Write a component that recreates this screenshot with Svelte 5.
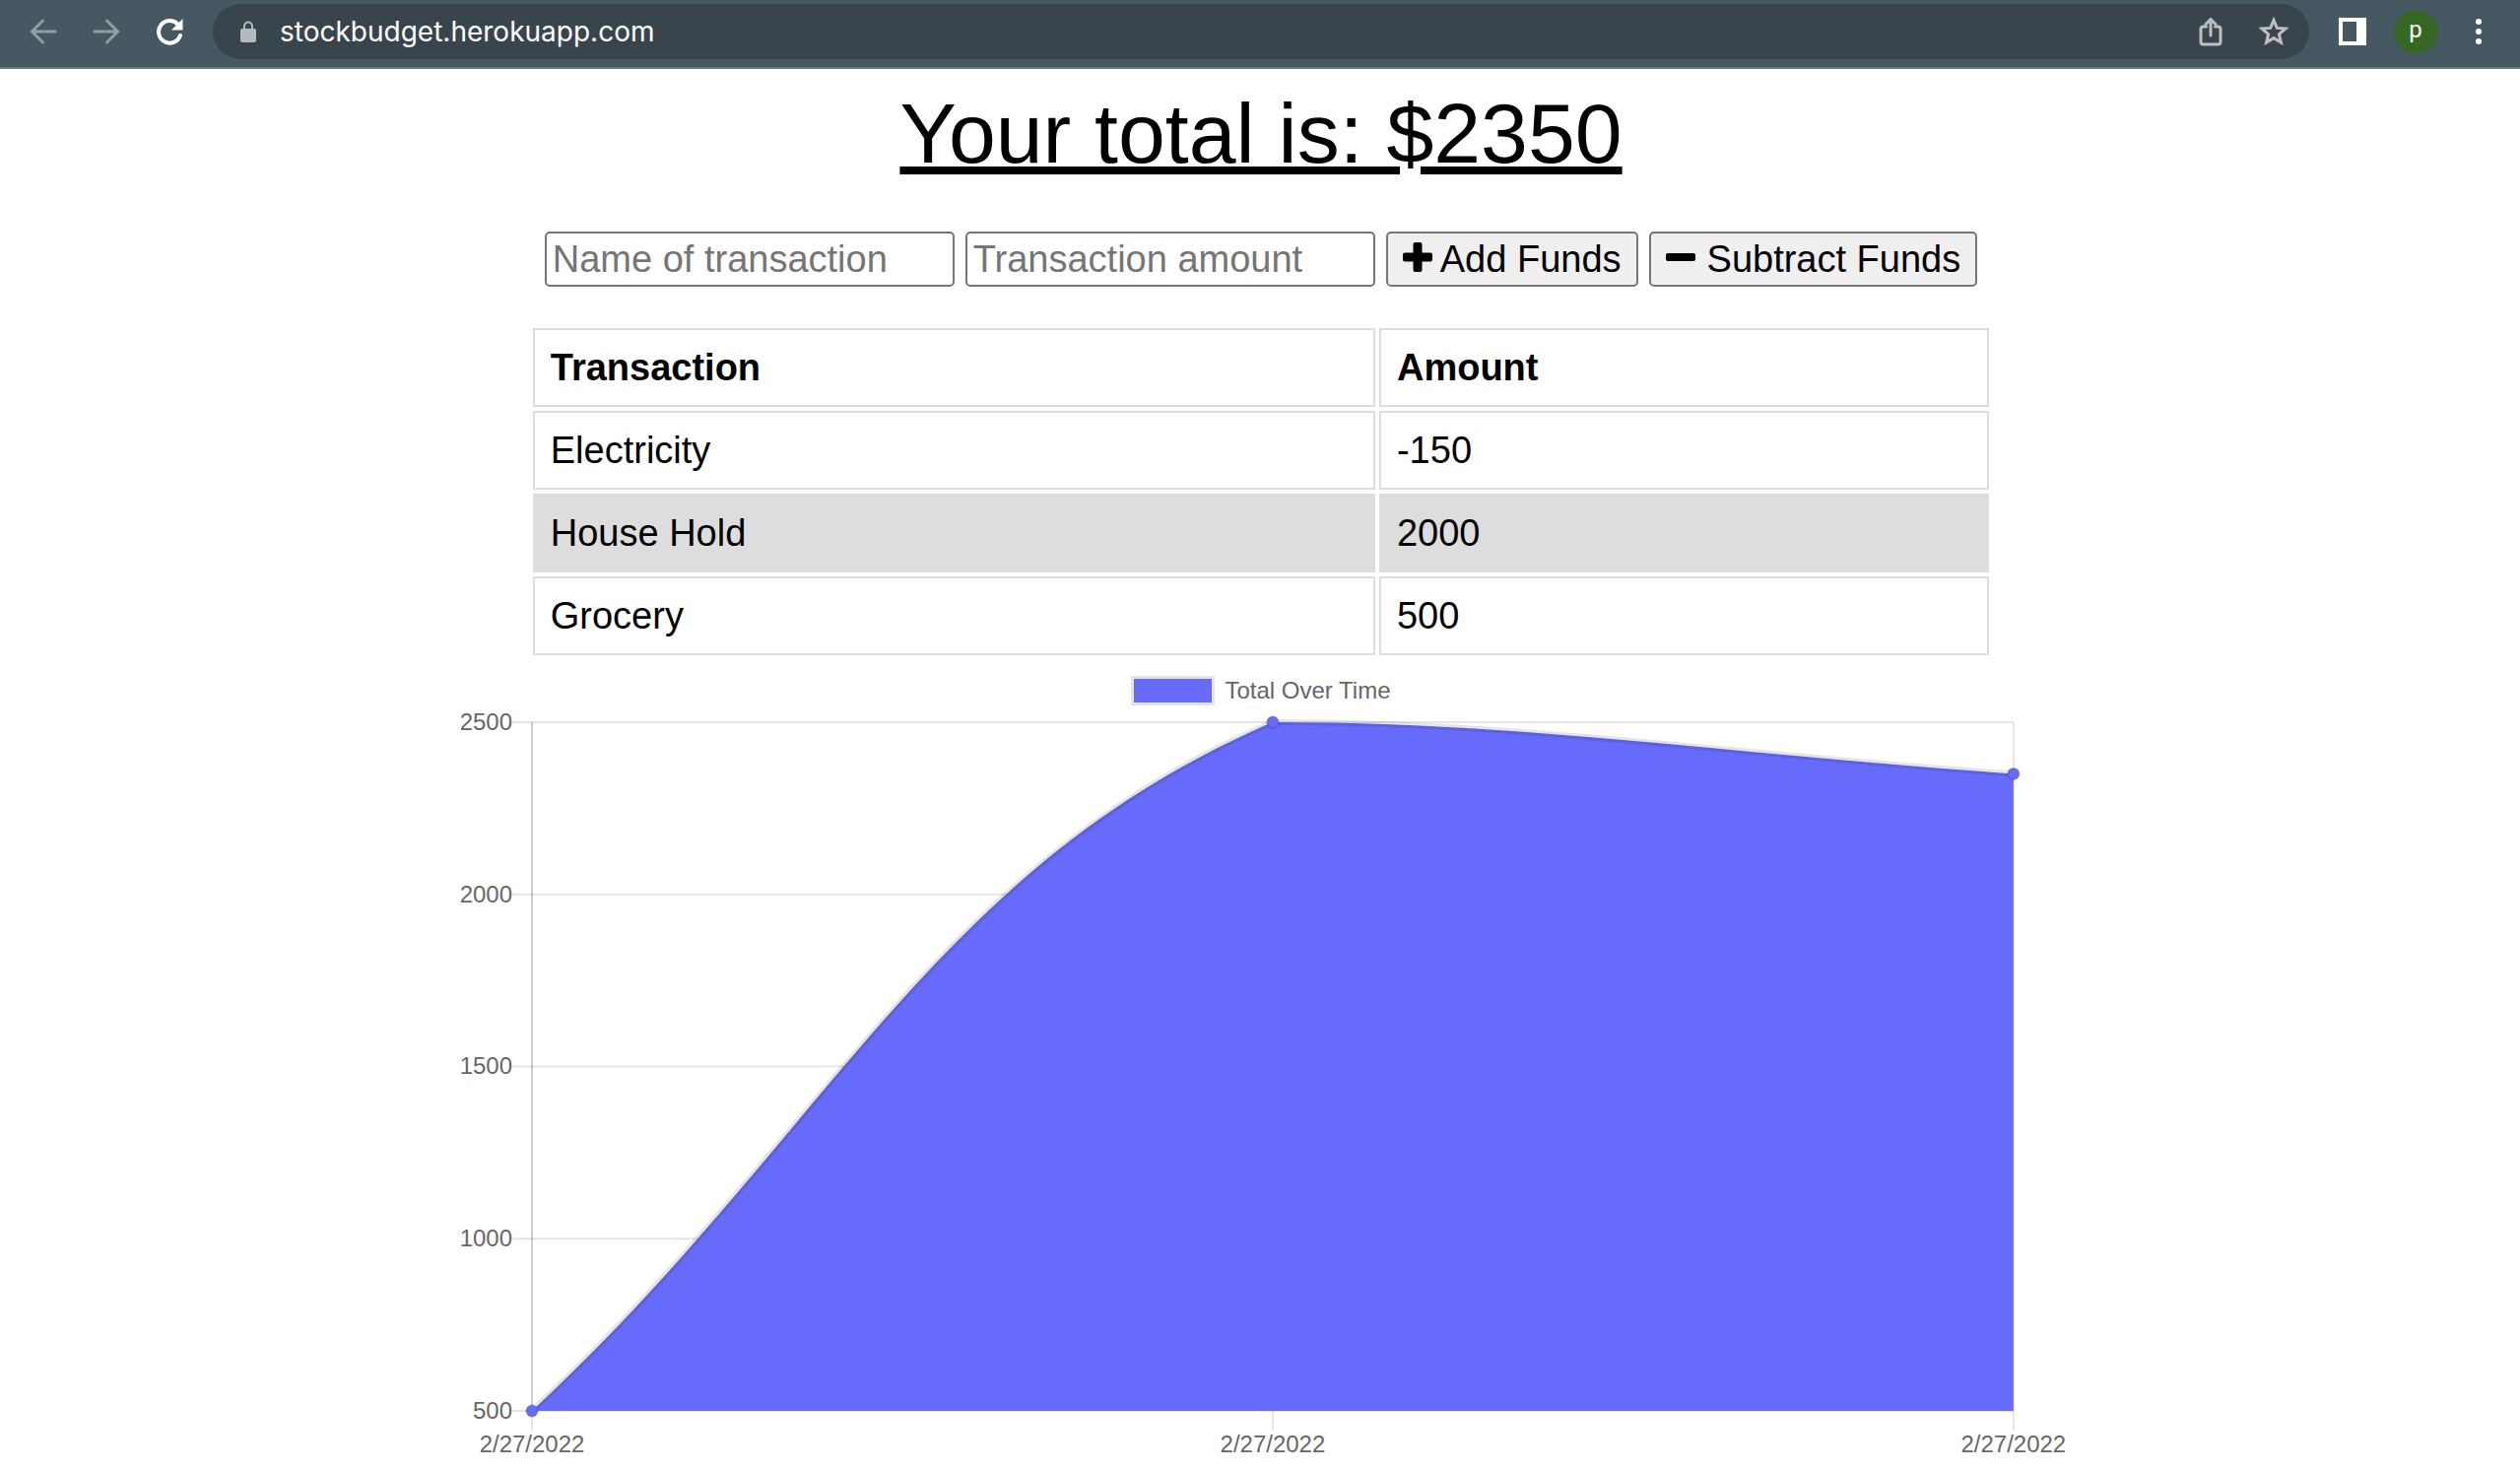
<script>
  const transactions = [
    { name: 'Electricity', amount: -150 },
    { name: 'House Hold', amount: 2000 },
    { name: 'Grocery', amount: 500 }
  ];
  const total = transactions.reduce((sum, t) => sum + t.amount, 0);

  // Running totals, oldest transaction first
  const points = [
    { date: '2/27/2022', value: 500 },
    { date: '2/27/2022', value: 2500 },
    { date: '2/27/2022', value: 2350 }
  ];
  const ticks = [2500, 2000, 1500, 1000, 500];

  const left = 80;
  const right = 1584;
  const top = 13;
  const bottom = 712;
  const tension = 0.4;

  const yOf = (v) => bottom - ((v - 500) / 2000) * (bottom - top);
  const dots = points.map((p, i) => ({
    x: left + (i * (right - left)) / (points.length - 1),
    y: yOf(p.value),
    date: p.date
  }));

  const clamp = (y) => Math.min(bottom, Math.max(top, y));

  function controls(i) {
    const cur = dots[i];
    const prev = dots[i - 1] ?? cur;
    const next = dots[i + 1] ?? cur;
    const d01 = Math.hypot(cur.x - prev.x, cur.y - prev.y);
    const d12 = Math.hypot(next.x - cur.x, next.y - cur.y);
    const fa = (tension * d01) / (d01 + d12);
    const fb = (tension * d12) / (d01 + d12);
    const dx = next.x - prev.x;
    const dy = next.y - prev.y;
    return {
      before: [cur.x - fa * dx, clamp(cur.y - fa * dy)],
      after: [cur.x + fb * dx, clamp(cur.y + fb * dy)]
    };
  }

  let line = `M${dots[0].x} ${dots[0].y}`;
  for (let i = 1; i < dots.length; i++) {
    line += ` C${controls(i - 1).after} ${controls(i).before} ${dots[i].x},${dots[i].y}`;
  }
  const area = `${line} V${bottom} H${left} Z`;
</script>

<header class="toolbar">
  <nav class="nav" aria-label="Browser">
    <button class="icon dim" aria-label="Back">
      <svg width="28" height="28" viewBox="0 0 28 28"><path d="M26 14H3M13.500 3L2.500 14l11 11" /></svg>
    </button>
    <button class="icon dim" aria-label="Forward">
      <svg width="28" height="28" viewBox="0 0 28 28"><path d="M2 14h23M14.500 3l11 11-11 11" /></svg>
    </button>
    <button class="icon" aria-label="Reload">
      <svg width="28" height="28" viewBox="0 0 28 28">
        <path class="reload" d="M25 18A11.300 11.300 0 1 1 22.500 6.500" />
        <path class="solid" d="M27.500 1v11.500H16z" />
      </svg>
    </button>
  </nav>
  <div class="address">
    <svg class="lock" width="16" height="22" viewBox="0 0 16 22">
      <path class="shackle" d="M4 9V5.500a4 4 0 0 1 8 0V9" />
      <rect y="8" width="16" height="14" rx="2" />
    </svg>
    <input class="url" type="text" aria-label="Address" value="stockbudget.herokuapp.com" />
    <button class="icon pale" aria-label="Share">
      <svg width="24" height="30" viewBox="0 0 24 30">
        <path d="M7.500 10H4.500a2.500 2.500 0 0 0-2.500 2.500v13a2.500 2.500 0 0 0 2.500 2.500h15a2.500 2.500 0 0 0 2.500-2.500v-13a2.500 2.500 0 0 0-2.500-2.500h-3M12 19V3M7 7.500l5-5 5 5" />
      </svg>
    </button>
    <button class="icon pale" aria-label="Bookmark">
      <svg width="30" height="30" viewBox="0 0 30 30">
        <path d="M15 3.500l3.300 7.900 8.600.7-6.500 5.600 2 8.400-7.400-4.500-7.400 4.500 2-8.400-6.500-5.600 8.600-.7z" />
      </svg>
    </button>
  </div>
  <button class="icon" aria-label="Side panel">
    <svg width="28" height="28" viewBox="0 0 28 28"><path class="solid" fill-rule="evenodd" d="M0 0h28v28H0zM4 4v20h14V4z" /></svg>
  </button>
  <button class="avatar" aria-label="Profile">p</button>
  <button class="icon" aria-label="Menu">
    <svg width="8" height="28" viewBox="0 0 8 28">
      <circle class="solid" cx="4" cy="4" r="3" />
      <circle class="solid" cx="4" cy="14" r="3" />
      <circle class="solid" cx="4" cy="24" r="3" />
    </svg>
  </button>
</header>

<main>
  <h1>Your total is: ${total}</h1>

  <form class="form" onsubmit={(e) => e.preventDefault()}>
    <input type="text" aria-label="Name of transaction" placeholder="Name of transaction" />
    <input type="text" inputmode="numeric" aria-label="Transaction amount" placeholder="Transaction amount" />
    <button type="submit" class="add">
      <svg width="30" height="30" viewBox="0 0 30 30">
        <path d="M12.500 0h5a2 2 0 0 1 2 2v8.500H28a2 2 0 0 1 2 2v5a2 2 0 0 1-2 2h-8.500V28a2 2 0 0 1-2 2h-5a2 2 0 0 1-2-2v-8.500H2a2 2 0 0 1-2-2v-5a2 2 0 0 1 2-2h8.500V2a2 2 0 0 1 2-2z" />
      </svg>
      Add Funds
    </button>
    <button type="submit" class="sub">
      <svg width="30" height="30" viewBox="0 0 30 30"><rect y="11" width="30" height="8" rx="2" /></svg>
      Subtract Funds
    </button>
  </form>

  <table>
    <thead>
      <tr><th class="name">Transaction</th><th>Amount</th></tr>
    </thead>
    <tbody>
      {#each transactions as t}
        <tr><td>{t.name}</td><td>{t.amount}</td></tr>
      {/each}
    </tbody>
  </table>

  <figure>
    <figcaption><span class="swatch"></span>Total Over Time</figcaption>
    <svg class="chart" viewBox="0 0 1640 772" role="img" aria-label="Total over time">
      {#each ticks as tick}
        <line class="grid" x1="60" x2={right} y1={yOf(tick)} y2={yOf(tick)} />
        <text x="60" y={yOf(tick) + 8} text-anchor="end">{tick}</text>
      {/each}
      {#each dots as d, i}
        <line class="grid" x1={d.x} x2={d.x} y1={i === 0 ? bottom : top} y2={bottom + 20} />
        <text x={d.x} y={bottom + 42} text-anchor="middle">{d.date}</text>
      {/each}
      <line class="axis" x1={left} x2={left} y1={top} y2={bottom} />
      <path class="area" d={area} />
      <path class="curve" d={line} />
      {#each dots as d}
        <circle class="dot" cx={d.x} cy={d.y} r="6" />
      {/each}
    </svg>
  </figure>
</main>

<style>
  :global(body) {
    margin: 0;
    background: #fff;
    color: #000;
    font-family: 'Liberation Sans', Arial, sans-serif;
  }

  button,
  input {
    box-sizing: border-box;
    margin: 0;
    font: inherit;
  }

  .toolbar {
    display: flex;
    align-items: center;
    box-sizing: border-box;
    height: 70px;
    padding: 0 38px 4px 30px;
    border-bottom: 2px solid #6c7c85;
    background: #465861;
  }

  .nav {
    display: flex;
    gap: 36px;
    margin-right: 30px;
  }

  .icon {
    display: flex;
    padding: 0;
    border: 0;
    background: none;
    color: #fff;
  }

  .icon path {
    fill: none;
    stroke: currentColor;
    stroke-width: 3;
    stroke-linecap: round;
    stroke-linejoin: miter;
  }

  .icon .solid {
    fill: currentColor;
    stroke: none;
  }

  .icon .reload {
    stroke-width: 4;
  }

  .dim {
    color: #929ca1;
  }

  .pale {
    color: #bfbfbf;
  }

  .address {
    display: flex;
    flex: 1;
    align-items: center;
    gap: 37px;
    height: 56px;
    margin-right: 30px;
    padding: 0 21px 0 28px;
    border-radius: 28px;
    background: #39454c;
    box-sizing: border-box;
  }

  .lock {
    fill: #b4b9bc;
  }

  .shackle {
    fill: none;
    stroke: #b4b9bc;
    stroke-width: 2;
  }

  .url {
    flex: 1;
    min-width: 0;
    margin-left: -13px;
    padding: 0;
    border: 0;
    outline: 0;
    background: none;
    color: #fff;
    font-family: Inter, sans-serif;
    font-size: 28px;
  }

  .avatar {
    width: 44px;
    height: 44px;
    margin: 0 38px 0 28px;
    padding: 0 0 4px;
    border: 0;
    border-radius: 50%;
    background: #356822;
    color: #fff;
    font-family: Roboto, sans-serif;
    font-size: 24px;
    line-height: 40px;
  }

  main {
    display: flex;
    flex-direction: column;
    align-items: center;
    padding-left: 2px;
    font-size: 38px;
  }

  h1 {
    margin: 15px 0 50px;
    font-size: 86px;
    font-weight: 400;
    line-height: 100px;
    text-decoration: underline;
    text-decoration-thickness: 8px;
  }

  .form {
    display: flex;
    flex-wrap: wrap;
    justify-content: center;
    gap: 11px;
    margin-bottom: 38px;
  }

  .form input,
  .form button {
    height: 56px;
    border: 2px solid #767676;
    border-radius: 5px;
    color: #000;
    line-height: 44px;
  }

  .form input {
    width: 416px;
    padding: 0 6px;
    background: #fff;
  }

  .form input::placeholder {
    color: #757575;
    opacity: 1;
  }

  .form button {
    display: flex;
    align-items: center;
    padding: 0 15px;
    background: #efefef;
    white-space: nowrap;
  }

  .form svg {
    margin-bottom: 4px;
  }

  .add {
    gap: 8px;
  }

  .sub {
    gap: 12px;
  }

  table {
    width: calc(58% + 4px);
    border-spacing: 4px;
    line-height: 44px;
  }

  th,
  td {
    padding: 16px;
    border: 2px solid #ddd;
    text-align: left;
  }

  .name {
    width: 58%;
  }

  tbody tr:nth-child(even) {
    background: #ddd;
  }

  figure {
    width: calc(64% + 4px);
    margin: 17px 0 0;
  }

  figcaption {
    display: flex;
    align-items: center;
    justify-content: center;
    gap: 10px;
    height: 30px;
    margin-bottom: 4px;
    color: #666;
    font-size: 24px;
  }

  .swatch {
    width: 79px;
    height: 24px;
    border: 3px solid #e5e5e5;
    background: #676bfb;
  }

  .chart {
    display: block;
    width: 100%;
    fill: #666;
    font-size: 24px;
  }

  .grid {
    stroke: rgba(0, 0, 0, 0.1);
    stroke-width: 2;
  }

  .axis {
    stroke: rgba(0, 0, 0, 0.2);
    stroke-width: 2;
  }

  .area,
  .dot {
    fill: #676bfb;
  }

  .curve {
    fill: none;
    stroke: rgba(0, 0, 0, 0.1);
    stroke-width: 6;
  }

  .dot {
    stroke: rgba(0, 0, 0, 0.1);
    stroke-width: 2;
  }
</style>
